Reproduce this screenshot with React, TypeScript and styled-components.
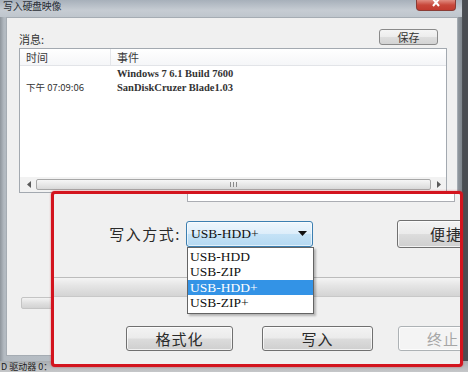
import React from "react";
import styled, { createGlobalStyle } from "styled-components";

const GlobalStyle = createGlobalStyle`
  html, body { margin: 0; padding: 0; }
  body {
    width: 468px;
    height: 372px;
    overflow: hidden;
    background: #5d6166;
    font-family: "Noto Sans CJK SC", "Noto Sans", sans-serif;
  }
`;

const Screen = styled.div`
  position: relative;
  width: 468px;
  height: 372px;
  overflow: hidden;
  display: flex;
  flex-direction: column;
  background: linear-gradient(90deg, #b9bcbf 0%, #9da1a5 96%, #4a4d52 99%);
`;

const Window = styled.div`
  width: 462px;
  height: 361px;
  display: flex;
  flex-direction: column;
  background: linear-gradient(90deg, #8e959c 0px, #b3bac1 4px, #c4cbd2 50%, #aab1b8 98%, #7d848b 100%);
`;

const TitleBar = styled.div`
  height: 17px;
  display: flex;
  align-items: flex-start;
  justify-content: space-between;
  padding: 0 6px 0 3px;
  background: linear-gradient(180deg, #a7b0ba 0%, #c6ccd3 60%, #bfc6cd 100%);
`;

const Title = styled.span`
  font-size: 10px;
  line-height: 11px;
  margin-top: 0;
  color: #2a2f36;
  letter-spacing: -0.3px;
`;

const CloseButton = styled.div`
  width: 38px;
  height: 11px;
  margin-top: -1px;
  border: 1px solid #8a3b34;
  border-top: none;
  border-radius: 0 0 4px 4px;
  background: linear-gradient(180deg, #e59a8f 0%, #c8473a 55%, #c23b2f 100%);
  display: flex;
  justify-content: center;
  align-items: flex-start;
`;

const Body = styled.div`
  flex: 1;
  display: flex;
  padding: 0 6px 5px 6px;
`;

const Client = styled.div`
  flex: 1;
  display: flex;
  flex-direction: column;
  padding: 10px 10px 0 12px;
  background: #f0f0f0;
  border: 1px solid #a5acb3;
  box-sizing: border-box;
`;

const MsgRow = styled.div`
  height: 17px;
  display: flex;
  align-items: flex-end;
  justify-content: space-between;
  padding-right: 9px;
`;

const Label = styled.span`
  font-size: 11px;
  line-height: 12px;
  color: #333;
`;

const SmallButton = styled.div`
  width: 59px;
  height: 16px;
  box-sizing: border-box;
  border: 1px solid #8a8a8a;
  border-radius: 3px;
  background: linear-gradient(180deg, #f5f5f5 0%, #ececec 50%, #dedede 51%, #d3d3d3 100%);
  font-size: 11px;
  line-height: 14px;
  color: #333;
  text-align: center;
`;

const ListBox = styled.div`
  margin-top: 3px;
  width: 428px;
  height: 145px;
  box-sizing: border-box;
  border: 1px solid #a3a9b0;
  background: #fff;
  display: flex;
  flex-direction: column;
`;

const HeaderRow = styled.div`
  height: 16px;
  display: flex;
  align-items: center;
  border-bottom: 1px solid #e2e4e8;
  background: linear-gradient(180deg, #ffffff 0%, #f5f6f8 100%);
`;

const HeadCell = styled.div<{ $w: number; $last?: boolean }>`
  width: ${(p) => p.$w}px;
  height: 100%;
  box-sizing: border-box;
  padding-left: 6px;
  font-size: 11px;
  line-height: 16px;
  color: #3a3a3a;
  border-right: ${(p) => (p.$last ? "none" : "1px solid #e4e6ea")};
`;

const Row = styled.div`
  height: 14px;
  display: flex;
  align-items: center;
`;

const TimeCell = styled.div`
  width: 91px;
  flex: none;
  padding-left: 6px;
  box-sizing: border-box;
  font-size: 9.5px;
  color: #333;
  white-space: nowrap;
`;

const EventCell = styled.div`
  padding-left: 6px;
  font-family: "Liberation Serif", "DejaVu Serif", serif;
  font-size: 10.5px;
  font-weight: bold;
  color: #333;
  white-space: nowrap;
`;

const Spacer = styled.div`
  flex: 1;
`;

const HScroll = styled.div`
  height: 14px;
  display: flex;
  align-items: center;
  padding: 0 2px 1px 3px;
  background: #f2f2f2;
  gap: 2px;
`;

const ScrollArrow = styled.div`
  width: 11px;
  height: 12px;
  display: flex;
  align-items: center;
  justify-content: center;
`;

const Thumb = styled.div`
  flex: 1;
  height: 11px;
  box-sizing: border-box;
  border: 1px solid #a7a7a7;
  border-radius: 2px;
  background: linear-gradient(180deg, #f6f6f6 0%, #e8e8e8 50%, #d9d9d9 100%);
  display: flex;
  justify-content: center;
  align-items: center;
`;

const Grip = styled.div`
  width: 7px;
  height: 5px;
  background: repeating-linear-gradient(90deg, #8a8a8a 0 1px, transparent 1px 3px);
`;

const BackProgress = styled.div`
  margin-top: 104px;
  margin-left: 2px;
  height: 12px;
  box-sizing: border-box;
  border: 1px solid #c4c4c4;
  border-radius: 2px;
  background: linear-gradient(180deg, #f3f3f3 0%, #e0e0e0 50%, #d2d2d2 100%);
`;

const StatusLine = styled.div`
  height: 11px;
  padding-left: 1px;
  font-size: 9px;
  line-height: 11px;
  color: #1c1c1c;
  background: linear-gradient(180deg, #a9adb1 0%, #c5c7c9 100%);
  white-space: nowrap;
`;

/* the magnified inset that lies over the lower half of the dialog */
const Callout = styled.div`
  position: absolute;
  left: 51px;
  top: 191px;
  width: 412px;
  height: 176px;
  box-sizing: border-box;
  border: 3px solid #d3141e;
  border-radius: 4px;
  box-shadow: 0 0 2px rgba(210, 20, 30, 0.6);
  background: #f0f0f0;
  overflow: hidden;
  display: flex;
  flex-direction: column;
`;

const FieldEdge = styled.div`
  margin-left: 133px;
  width: 268px;
  height: 8px;
  box-sizing: border-box;
  border: 1px solid #abadb3;
  border-top: none;
  background: #fff;
`;

const MethodRow = styled.div`
  margin-top: 17px;
  height: 29px;
  display: flex;
  align-items: center;
`;

const MethodLabel = styled.span`
  flex: none;
  width: 127px;
  text-align: right;
  font-size: 15px;
  color: #2a2a2a;
  letter-spacing: 1.5px;
`;

const Combo = styled.div`
  flex: none;
  position: relative;
  margin-left: 5px;
  width: 127px;
  height: 26px;
  box-sizing: border-box;
  border: 1px solid #3c7fb1;
  border-radius: 3px;
  background: linear-gradient(180deg, #eef7fd 0%, #dcedfa 50%, #c4e2f6 51%, #b5d9f2 100%);
  display: flex;
  align-items: center;
  justify-content: space-between;
  padding: 0 5px 0 4px;
  box-shadow: inset 0 0 0 1px rgba(255, 255, 255, 0.6);
`;

const SerifText = styled.span`
  font-family: "Liberation Serif", "DejaVu Serif", serif;
  font-size: 13.5px;
  color: #111;
`;

const DropList = styled.div`
  position: absolute;
  left: 0;
  top: 25px;
  width: 127px;
  box-sizing: border-box;
  border: 1px solid #646464;
  background: #fff;
  box-shadow: 2px 2px 2px rgba(0, 0, 0, 0.25);
  padding: 1px 0 2px 0;
  z-index: 2;
`;

const DropItem = styled.div<{ $active?: boolean }>`
  height: 15.5px;
  line-height: 15px;
  padding-left: 2px;
  font-family: "Liberation Serif", "DejaVu Serif", serif;
  font-size: 13.5px;
  color: ${(p) => (p.$active ? "#fff" : "#111")};
  background: ${(p) => (p.$active ? "#3393e6" : "transparent")};
`;

const BigButton = styled.div<{ $w: number; $h?: number; $gap?: number; $disabled?: boolean }>`
  flex: none;
  width: ${(p) => p.$w}px;
  margin-left: ${(p) => p.$gap ?? 0}px;
  height: ${(p) => (p.$h ? `${p.$h}px` : "100%")};
  box-sizing: border-box;
  border: 1px solid ${(p) => (p.$disabled ? "#adb2b5" : "#707070")};
  border-radius: 3px;
  background: ${(p) =>
    p.$disabled
      ? "#f4f4f4"
      : "linear-gradient(180deg, #f3f3f3 0%, #ebebeb 48%, #dcdcdc 52%, #cfcfcf 100%)"};
  box-shadow: inset 0 0 0 1px rgba(255, 255, 255, 0.7);
  font-size: 15px;
  color: ${(p) => (p.$disabled ? "#a6a6a6" : "#2a2a2a")};
  display: flex;
  align-items: center;
  justify-content: center;
  letter-spacing: 1px;
`;

/* buttons whose right part is cut off by the inset edge: label sits left */
const CutButton = styled(BigButton)<{ $pad: number }>`
  justify-content: flex-start;
  padding-left: ${(p) => p.$pad}px;
`;

const Progress = styled.div`
  margin-top: 29px;
  height: 20px;
  box-sizing: border-box;
  border-top: 1px solid #bcbcbc;
  border-bottom: 1px solid #c8c8c8;
  background: linear-gradient(180deg, #f4f4f4 0%, #e4e4e4 45%, #d4d4d4 100%);
`;

const ButtonRow = styled.div`
  margin-top: 29px;
  height: 25px;
  display: flex;
  padding-left: 72px;
`;

const options = ["USB-HDD", "USB-ZIP", "USB-HDD+", "USB-ZIP+"];

const App = () => {
  return (
    <>
      <GlobalStyle />
      <Screen>
        <Window>
          <TitleBar>
            <Title>写入硬盘映像</Title>
            <CloseButton>
              <svg width="10" height="8" viewBox="0 0 10 8">
                <path d="M2 0 L8 7 M8 0 L2 7" stroke="#fff" strokeWidth="2" />
              </svg>
            </CloseButton>
          </TitleBar>
          <Body>
            <Client>
              <MsgRow>
                <Label>消息:</Label>
                <SmallButton>保存</SmallButton>
              </MsgRow>
              <ListBox>
                <HeaderRow>
                  <HeadCell $w={91}>时间</HeadCell>
                  <HeadCell $w={335} $last>
                    事件
                  </HeadCell>
                </HeaderRow>
                <Row>
                  <TimeCell />
                  <EventCell>Windows 7 6.1 Build 7600</EventCell>
                </Row>
                <Row>
                  <TimeCell>下午 07:09:06</TimeCell>
                  <EventCell>SanDiskCruzer Blade1.03</EventCell>
                </Row>
                <Spacer />
                <HScroll>
                  <ScrollArrow>
                    <svg width="4" height="7" viewBox="0 0 4 7">
                      <polygon points="4,0 0,3.5 4,7" fill="#5a5a5a" />
                    </svg>
                  </ScrollArrow>
                  <Thumb>
                    <Grip />
                  </Thumb>
                  <ScrollArrow>
                    <svg width="4" height="7" viewBox="0 0 4 7">
                      <polygon points="0,0 4,3.5 0,7" fill="#5a5a5a" />
                    </svg>
                  </ScrollArrow>
                </HScroll>
              </ListBox>
              <BackProgress />
            </Client>
          </Body>
        </Window>
        <StatusLine>D 驱动器 0：</StatusLine>

        <Callout>
          <FieldEdge />
          <MethodRow>
            <MethodLabel>写入方式:</MethodLabel>
            <Combo>
              <SerifText>USB-HDD+</SerifText>
              <svg width="9" height="5" viewBox="0 0 9 5">
                <polygon points="0,0 9,0 4.5,5" fill="#111" />
              </svg>
              <DropList>
                {options.map((o) => (
                  <DropItem key={o} $active={o === "USB-HDD+"}>
                    {o}
                  </DropItem>
                ))}
              </DropList>
            </Combo>
            <CutButton $w={100} $h={28} $gap={84} $pad={32}>
              便捷
            </CutButton>
          </MethodRow>
          <Progress />
          <ButtonRow>
            <BigButton $w={107}>格式化</BigButton>
            <BigButton $w={111} $gap={29}>
              写入
            </BigButton>
            <CutButton $w={110} $gap={25} $pad={28} $disabled>
              终止
            </CutButton>
          </ButtonRow>
        </Callout>
      </Screen>
    </>
  );
};

export default App;
